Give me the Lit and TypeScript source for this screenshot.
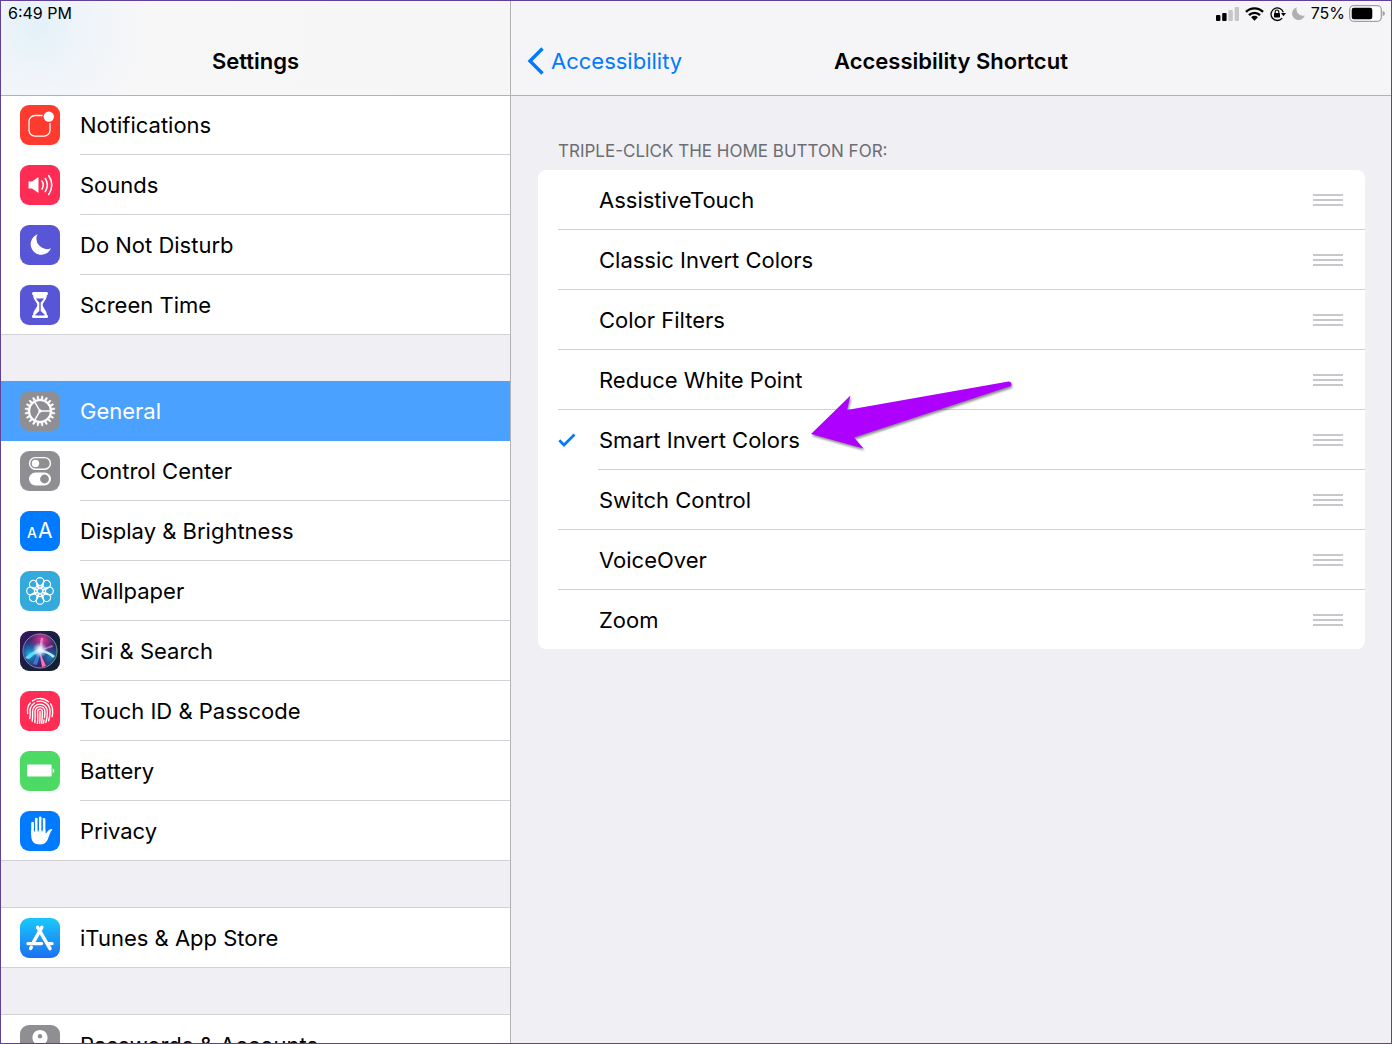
import { LitElement, html, svg, css, nothing } from "lit";
import type { SVGTemplateResult } from "lit";
import { customElement, property, state } from "lit/decorators.js";
import { classMap } from "lit/directives/class-map.js";

const ring = (count: number) => Array.from({ length: count }, (_, i) => (360 / count) * i);

/* Glyphs are drawn on a 40 x 40 tile. */
const glyphs: Record<string, SVGTemplateResult> = {
  notifications: svg`
    <path d="M22.5 10.5H15A6 6 0 0 0 9 16.5V25.5A6 6 0 0 0 15 31.2H24A6 6 0 0 0 30 25.5V18"
      fill="none" stroke="#fff" stroke-width="1.3"/>
    <circle cx="28.8" cy="11.6" r="5.2" fill="#fff"/>`,
  sounds: svg`
    <path d="M8.5 16.5H12L18.5 12V28L12 23.5H8.5Z" fill="#fff"/>
    <g fill="none" stroke="#fff" stroke-width="1.6" stroke-linecap="round">
      <path d="M22 16Q24.6 20 22 24"/><path d="M25.3 13.5Q29.4 20 25.3 26.500"/>
      <path d="M28.7 10.5Q34.8 20 28.7 29.500"/>
    </g>`,
  moon: svg`<path d="M17.5 9.2A10.6 10.6 0 1 0 31 23.3A10.5 10.5 0 0 1 17.5 9.2Z" fill="#fff"/>`,
  hourglass: svg`
    <path d="M13.500 7H26.500Q28 7 28 8.500T26.800 10.200C26.800 15 22.700 17 22.700 20S26.800 25 26.800 29.800Q28 30 28 31.500T26.500 33H13.500Q12 33 12 31.500T13.200 29.800C13.200 25 17.300 23 17.300 20S13.200 15 13.200 10.200Q12 10 12 8.500T13.500 7Z" fill="#fff"/>
    <path d="M16 13.500H24Q22.500 16 20.700 17.500V26L24.500 29.500V30.500H15.500V29.500L19.300 26V17.500Q17.500 16 16 13.500Z" fill="#5856d6"/>`,
  gear: svg`
    ${ring(20).map((a) => svg`<path d="M19 8L19.400 5H20.600L21 8Z" fill="#fff" stroke="#fff" stroke-width=".5" transform="rotate(${a + 9} 20 20)"/>`)}
    <circle cx="20" cy="20" r="11" fill="none" stroke="#fff" stroke-width="2.2"/>
    <circle cx="20" cy="20" r="1.7" fill="#fff"/>
    <path d="M20 20H30M20 20L14.700 10.800M20 20L14.700 29.200" stroke="#fff" stroke-width="1.5"/>`,
  toggles: svg`
    <rect x="9.6" y="6.6" width="20.8" height="11.6" rx="5.8" fill="none" stroke="#fff" stroke-width="1.4"/>
    <circle cx="15.5" cy="12.4" r="3.7" fill="#fff"/>
    <rect x="9" y="21.5" width="22" height="13" rx="6.5" fill="#fff"/>
    <circle cx="24.5" cy="28" r="4.4" fill="#8e8e93"/>`,
  letters: svg`
    <text x="7" y="26.5" font-size="14" font-weight="500" fill="#fff">A</text>
    <text x="18" y="26.5" font-size="21" fill="#fff">A</text>`,
  flower: svg`
    <g fill="none" stroke="#fff" stroke-width="1.2">
      ${ring(8).map((a) => svg`<circle cx="20" cy="10.6" r="3.9" transform="rotate(${a} 20 20)"/><path transform="rotate(${a} 20 20)" d="M16.600 12.600Q17 15.500 18.700 17.500M23.400 12.600Q23 15.500 21.300 17.500"/>`)}
      <circle cx="20" cy="20" r="2.7"/>
    </g>`,
  siri: svg`
    <defs>
      <radialGradient id="rose"><stop offset="0" stop-color="#f0389c"/><stop offset="1" stop-color="#a8277f" stop-opacity="0"/></radialGradient>
      <radialGradient id="cyan"><stop offset="0" stop-color="#13bfe8"/><stop offset="1" stop-color="#1268b8" stop-opacity="0"/></radialGradient>
      <radialGradient id="glow"><stop offset="0" stop-color="#fff"/><stop offset=".4" stop-color="#e6f6ff" stop-opacity=".8"/><stop offset="1" stop-color="#9fd8ff" stop-opacity="0"/></radialGradient>
      <linearGradient id="rim" x1="0" x2="1"><stop offset="0" stop-color="#7f82c8"/><stop offset=".5" stop-color="#c87ab0"/><stop offset="1" stop-color="#4fae98"/></linearGradient>
      <clipPath id="disc"><circle cx="20" cy="20" r="16.5"/></clipPath>
    </defs>
    <g clip-path="url(#disc)">
      <circle cx="20" cy="20" r="17" fill="#33286c"/>
      <circle cx="22" cy="9" r="14" fill="url(#rose)"/>
      <circle cx="10" cy="23" r="14" fill="url(#cyan)"/>
      <circle cx="30" cy="26" r="12" fill="url(#cyan)" opacity=".6"/>
      <path d="M19 19L26 35L22 36Z" fill="#ff6fb8"/>
      <path d="M20 18Q11 20 5 27L9 28Q14 23 20 21Z" fill="#62d8f5"/>
      <path d="M20 18Q29 20 35 25L33 27Q28 22 20 21Z" fill="#b4eef0"/>
      <path d="M19 18L21 7L23 7L22 18Z" fill="#e79ad6" opacity=".8"/>
      <path d="M19 19L13 33L17 34L21 20Z" fill="#4a8cf0" opacity=".7"/>
      <path d="M20 19L32 14L33 16L20 20Z" fill="#d78ad6" opacity=".7"/>
    </g>
    <circle cx="20" cy="19" r="8" fill="url(#glow)"/>
    <circle cx="20" cy="20" r="17" fill="none" stroke="url(#rim)"/>`,
  fingerprint: svg`
    <g fill="none" stroke="#fff" stroke-width="1.4" stroke-linecap="round">
      <path d="M12.500 9.900A12.600 12.600 0 0 1 28.500 10.700"/>
      <path d="M7.700 22.500C6.900 18 8 14.300 10.300 11.900"/>
      <path d="M30.600 12.800C33 16 33 20.500 32.200 25.500"/>
      <path d="M9.700 27.500C10.400 25 10 23 10 20.500A10 10 0 0 1 14.500 12"/>
      <path d="M17 10.600A10 10 0 0 1 30 20.500C30 24 29.600 27 28.600 29.800"/>
      <path d="M12.200 30C12.900 27 12.600 23.500 12.600 20.500A7.400 7.400 0 0 1 27.400 20.500C27.400 25 27 28 25.800 31.500"/>
      <path d="M14.800 31.500C15.500 28 15.100 23.500 15.100 20.500A4.900 4.900 0 0 1 24.900 20.500C24.900 23 24.800 25 24.500 26.500"/>
      <path d="M17.400 32.300C18 29 17.600 23.500 17.600 20.500A2.400 2.400 0 0 1 22.400 20.500C22.400 25 22.200 28 21.700 32.300"/>
      <path d="M20 20.500C20 25 20.100 29 19.600 32.400M23.900 29L23.500 32"/>
    </g>`,
  battery: svg`
    <rect x="7" y="13.5" width="24.6" height="12" rx="1" fill="#fff"/>
    <path d="M32.600 17.500Q34.400 18 34.400 19.700T32.600 22Z" fill="#fff"/>`,
  hand: svg`
    <g fill="none" stroke="#fff" stroke-width="2.7" stroke-linecap="round">
      <path d="M12.600 12.200V23M16.300 8V22M20.200 6.900V22M24 8.300V22"/>
    </g>
    <path d="M11.250 19H25.400V22.500C27 22.500 27.300 19.500 30.300 18.300Q32.500 17.700 32.200 19C30 21 29.300 25 27.500 29Q25 33.500 20 33.500C14 33.500 11.250 30 11.250 25Z" fill="#fff"/>
    <path d="M14.450 12V20.500M18.250 9V20.500M22.100 9V20.500" stroke="#007aff" stroke-width="1"/>`,
  store: svg`
    <g fill="none" stroke="#fff" stroke-width="3.4" stroke-linecap="round">
      <path d="M21.800 9.300L13.600 23.800M11.300 29.300L10.600 30.500"/>
      <path d="M17.700 9.300L30 30.700"/>
      <path d="M8 25.600H21.500M28 25.600H32"/>
    </g>`,
  key: svg`
    <path d="M20 5A7.600 7.600 0 0 1 23.500 19.300V33L20 36L16.500 33V19.300A7.600 7.600 0 0 1 20 5Z" fill="#fff"/>
    <circle cx="20" cy="11.3" r="2.2" fill="#8e8e93"/>`,
};

interface Entry {
  label: string;
  glyph: string;
  tone: string;
}

const groups: Entry[][] = [
  [
    { label: "Notifications", glyph: "notifications", tone: "red" },
    { label: "Sounds", glyph: "sounds", tone: "pink" },
    { label: "Do Not Disturb", glyph: "moon", tone: "indigo" },
    { label: "Screen Time", glyph: "hourglass", tone: "indigo" },
  ],
  [
    { label: "General", glyph: "gear", tone: "gray" },
    { label: "Control Center", glyph: "toggles", tone: "gray" },
    { label: "Display & Brightness", glyph: "letters", tone: "blue" },
    { label: "Wallpaper", glyph: "flower", tone: "sky" },
    { label: "Siri & Search", glyph: "siri", tone: "night" },
    { label: "Touch ID & Passcode", glyph: "fingerprint", tone: "pink" },
    { label: "Battery", glyph: "battery", tone: "green" },
    { label: "Privacy", glyph: "hand", tone: "blue" },
  ],
  [{ label: "iTunes & App Store", glyph: "store", tone: "azure" }],
  [{ label: "Passwords & Accounts", glyph: "key", tone: "gray" }],
];

const shortcuts = [
  "AssistiveTouch",
  "Classic Invert Colors",
  "Color Filters",
  "Reduce White Point",
  "Smart Invert Colors",
  "Switch Control",
  "VoiceOver",
  "Zoom",
];

@customElement("app-tile")
class AppTile extends LitElement {
  @property() glyph = "";
  @property() tone = "";

  static styles = css`
    :host { display: block; flex: none; }
    .tile { display: block; width: 40px; height: 40px; border-radius: 9px; font-family: Inter, "Liberation Sans", sans-serif; }
    .red { background: #ff3b30; }
    .pink { background: #ff2d55; }
    .indigo { background: #5856d6; }
    .gray { background: #8e8e93; }
    .blue { background: #007aff; }
    .sky { background: #34aadc; }
    .night { background: linear-gradient(135deg, #3a1560, #17203f 50%, #14202e); }
    .green { background: #4cd964; }
    .azure { background: linear-gradient(#1ac8fc, #1d70f2); }
  `;

  render() {
    return html`<svg class="tile ${this.tone}" viewBox="0 0 40 40" aria-hidden="true">${glyphs[this.glyph]}</svg>`;
  }
}

@customElement("app-status")
class AppStatus extends LitElement {
  static styles = css`
    :host { display: flex; align-items: center; justify-content: flex-end; gap: 6px; }
    svg { display: block; }
    .charge { display: flex; align-items: center; gap: 4px; }
  `;

  render() {
    return html`
      <svg width="23" height="14" viewBox="0 0 23 14" role="img" aria-label="Cellular signal">
        <rect y="8" width="4.4" height="6" rx="1"/><rect x="6.2" y="6" width="4.4" height="8" rx="1"/>
        <rect x="12.4" y="3" width="4.4" height="11" rx="1" fill="#c6c6c8"/><rect x="18.6" width="4.4" height="14" rx="1" fill="#c6c6c8"/>
      </svg>
      <svg width="19" height="14" viewBox="0 0 19 14" role="img" aria-label="Wi-Fi">
        <g fill="none" stroke="#000" stroke-width="2.4"><path d="M1 4.900A12 12 0 0 1 18 4.900"/><path d="M4 8.200A7.700 7.700 0 0 1 15 8.200"/></g>
        <path d="M6.100 10.200A4.900 4.900 0 0 1 12.900 10.200L9.500 13.700Z"/>
      </svg>
      <svg width="16" height="16" viewBox="0 0 16 16" role="img" aria-label="Orientation locked">
        <path d="M12.200 12.200A6.300 6.300 0 1 1 13.300 6.200" fill="none" stroke="#000" stroke-width="1.3"/>
        <path d="M11 7H16L13.500 10.200Z"/><rect x="4" y="7" width="6" height="4.4" rx=".6"/>
        <path d="M5.200 7.300V5.800A1.800 1.800 0 0 1 8.800 5.800V7.300" fill="none" stroke="#000" stroke-width="1.1"/>
      </svg>
      <svg width="13" height="13" viewBox="0 0 13 13" role="img" aria-label="Do Not Disturb on">
        <path d="M4.800 .300A6.500 6.500 0 1 0 12.800 8.600A6.600 6.600 0 0 1 4.800 .300Z" fill="#b0b0b2"/>
      </svg>
      <span class="charge">
        75%
        <svg width="36" height="17" viewBox="0 0 36 17" role="img" aria-label="Battery level">
          <rect x=".7" y=".7" width="31.6" height="15.6" rx="4" fill="#fff" stroke="#a0a0a2" stroke-width="1.3"/>
          <rect x="2.7" y="2.8" width="20.6" height="11.4" rx="2.2"/>
          <path d="M33.600 5.700Q36 6.700 36 8.500T33.600 11.300Z" fill="#a0a0a2"/>
        </svg>
      </span>
    `;
  }
}

@customElement("app-root")
class AppRoot extends LitElement {
  @state() private current = "General";
  @state() private checked = new Set<string>(["Smart Invert Colors"]);

  static styles = css`
    :host { display: block; color: #000; font-family: Inter, "Liberation Sans", sans-serif; font-size: 22px; line-height: 28px; }
    * { box-sizing: border-box; }
    .screen { display: grid; grid-template-columns: minmax(0, 51fr) minmax(0, 88fr); height: 100vh; border: 1px solid #5f4199; background: #efeff4; }
    .pane { display: flex; flex-direction: column; min-height: 0; }
    .side { border-right: 1px solid #b2b2b6; }
    .head { position: relative; z-index: 1; flex: none; height: 95px; border-bottom: 1px solid #b2b2b6; background: #f5f5f7; }
    .side .head { background: radial-gradient(circle at 36px 26px, #e3f1f9, #f0f4f9 50px, #f7f7f8 110px, #f6f6f7); }
    .status { height: 25px; padding: 0 6px 0 7px; font-size: 16px; line-height: 25px; }
    .bar { display: grid; grid-template-columns: 1fr auto 1fr; align-items: center; height: 69px; padding: 0 16px; }
    h1, h2, h3 { margin: 0; font-size: 22px; line-height: 28px; font-weight: 600; }
    .bar h1, .bar h2 { grid-column: 2; }
    .back { display: flex; align-items: center; gap: 7px; justify-self: start; color: #007aff; text-decoration: none; }
    .scroll { flex: 1; min-height: 0; overflow: hidden; }
    .side .scroll { margin-top: -1px; }
    ul { list-style: none; margin: 0; padding: 0; }
    .group { background: #fff; border-top: 1px solid #d2d1d6; margin-bottom: 46px; }
    .group:first-child { border-top: 0; }
    .entry { display: flex; align-items: stretch; gap: 20px; height: 60px; padding-left: 19px; color: inherit; text-decoration: none; }
    .entry app-tile { align-self: center; }
    .name { flex: 1; display: flex; align-items: center; border-bottom: 1px solid #d2d1d6; }
    .entry.last { border-bottom: 1px solid #d2d1d6; }
    .last .name, .on .name { border-bottom: 0; }
    .entry.on { background: #4ba1ff; color: #fff; margin-top: -1px; }
    .content { padding: 41px 26px 26px 27px; }
    h3 { padding: 0 20px 5px; color: #6d6d72; font-size: 17px; font-weight: 400; }
    .card { background: #fff; border-radius: 8px; }
    .option { position: relative; display: flex; height: 60px; padding-left: 20px; }
    .option::after { content: ""; position: absolute; left: 20px; right: 0; bottom: 0; border-bottom: 1px solid #d2d1d6; }
    .option.on::after { left: 60px; }
    .option:last-child { height: 59px; }
    .option:last-child::after { display: none; }
    .pick { flex: 1; display: flex; align-items: center; gap: 22px; }
    .pick input { appearance: none; flex: none; width: 19px; height: 19px; margin: 0; }
    .pick svg { position: absolute; left: 20px; pointer-events: none; }
    .grip { display: grid; gap: 3px; align-content: center; width: 74px; padding: 0 22px; border: 0; background: none; }
    .grip i { display: block; height: 2px; background: #c7c7cc; }
    .arrow { position: absolute; left: 268px; top: -35px; z-index: 2; pointer-events: none; filter: drop-shadow(1px 2px 1px rgba(0, 0, 0, 0.45)); }
  `;

  private toggle(name: string) {
    const next = new Set(this.checked);
    next.has(name) ? next.delete(name) : next.add(name);
    this.checked = next;
  }

  private select(event: Event, name: string) {
    event.preventDefault();
    this.current = name;
  }

  private entry(item: Entry, last: boolean) {
    const on = item.label === this.current;
    return html`<li>
      <a class=${classMap({ entry: true, last, on })} href="#" aria-current=${on ? "page" : nothing}
        @click=${(e: Event) => this.select(e, item.label)}>
        <app-tile glyph=${item.glyph} tone=${item.tone}></app-tile>
        <span class="name">${item.label}</span>
      </a>
    </li>`;
  }

  private option(name: string) {
    const on = this.checked.has(name);
    return html`<li class=${classMap({ option: true, on })}>
      <label class="pick">
        <input type="checkbox" .checked=${on} @change=${() => this.toggle(name)} />
        ${on
          ? html`<svg width="18" height="14" viewBox="0 0 18 14" aria-hidden="true">
              <path d="M1.300 7.300L6 12L16.500 1.500" fill="none" stroke="#007aff" stroke-width="2.7"/>
            </svg>`
          : nothing}
        <span>${name}</span>
      </label>
      <button class="grip" aria-label="Reorder ${name}"><i></i><i></i><i></i></button>
      ${name === "Smart Invert Colors"
        ? html`<svg class="arrow" width="212" height="80" viewBox="0 0 212 80" aria-hidden="true">
            <path d="M5 59L44.500 20.500L41 35L202.500 6.500Q205.500 6.500 205.500 9.500Q205.500 11 203.500 11.500L48 62.500L57.500 73.500Z" fill="#ad00ff"/>
          </svg>`
        : nothing}
    </li>`;
  }

  render() {
    return html`
      <div class="screen">
        <nav class="pane side" aria-label="Settings">
          <header class="head">
            <div class="status">6:49 PM</div>
            <div class="bar"><h1>Settings</h1></div>
          </header>
          <div class="scroll">
            ${groups.map((g) => html`<ul class="group">${g.map((item, i) => this.entry(item, i === g.length - 1))}</ul>`)}
          </div>
        </nav>
        <main class="pane">
          <header class="head">
            <app-status class="status"></app-status>
            <div class="bar">
              <a class="back" href="#">
                <svg width="17" height="28" viewBox="0 0 17 28" aria-hidden="true">
                  <path d="M15.500 1.500L3 14L15.500 26.500" fill="none" stroke="#007aff" stroke-width="3.4"/>
                </svg>
                <span>Accessibility</span>
              </a>
              <h2>Accessibility Shortcut</h2>
            </div>
          </header>
          <div class="scroll content">
            <h3>TRIPLE-CLICK THE HOME BUTTON FOR:</h3>
            <ul class="card">${shortcuts.map((name) => this.option(name))}</ul>
          </div>
        </main>
      </div>
    `;
  }
}
